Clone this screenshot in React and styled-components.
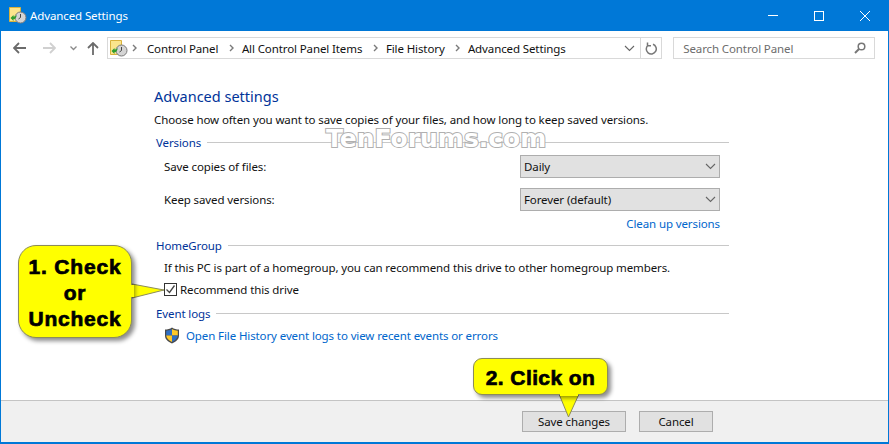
import React from "react";
import styled, { createGlobalStyle } from "styled-components";

const GlobalStyle = createGlobalStyle`
  html, body {
    margin: 0;
    padding: 0;
    background: #fff;
  }
  * {
    box-sizing: border-box;
  }
`;

const Window = styled.div`
  position: relative;
  width: 889px;
  height: 444px;
  display: flex;
  flex-direction: column;
  overflow: hidden;
  background: #fff;
  border: solid #0078d7;
  border-width: 0 1px 2px 1px;
  font-family: "Noto Sans", sans-serif;
  font-size: 11.5px;
  letter-spacing: -0.11px;
  color: #111;
`;

const TitleBar = styled.div`
  height: 31px;
  margin: 0 -1px;
  padding: 0 1px 0 9px;
  display: flex;
  align-items: center;
  background: #0078d7;
  color: #fff;
`;

const TitleText = styled.span`
  margin-left: 3px;
  flex: 1;
`;

const WinButton = styled.div`
  width: 46px;
  height: 31px;
  display: flex;
  align-items: center;
  justify-content: center;
`;

const NavBar = styled.div`
  height: 34px;
  padding: 6px 13px 6px 7px;
  display: flex;
  align-items: stretch;
`;

const NavIcon = styled.div`
  width: ${(p) => p.$w}px;
  display: flex;
  align-items: center;
  justify-content: center;
`;

const AddressBox = styled.div`
  width: 556px;
  display: flex;
  align-items: center;
  border: 1px solid #d9d9d9;
  padding-left: 2px;
`;

const Crumbs = styled.div`
  flex: 1;
  display: flex;
  align-items: center;
`;

const Crumb = styled.span`
  width: ${(p) => p.$w}px;
  white-space: nowrap;
`;

const CrumbArrow = styled.svg`
  width: 5px;
  height: 8px;
  margin: 0 ${(p) => p.$after}px 0 ${(p) => p.$before}px;
`;

const AddressTail = styled.div`
  width: 21px;
  height: 100%;
  display: flex;
  align-items: center;
  justify-content: center;
  border-left: ${(p) => (p.$divided ? "1px solid #d9d9d9" : "none")};
`;

const SearchBox = styled.div`
  width: 202px;
  margin-left: 11px;
  padding: 0 8px 0 9px;
  display: flex;
  align-items: center;
  justify-content: space-between;
  border: 1px solid #d9d9d9;
  color: #6d6d6d;
`;

const Content = styled.div`
  flex: 1;
  padding: 21px 0 0 153px;
  width: 728px;
  display: flex;
  flex-direction: column;
`;

const Heading = styled.h1`
  margin: 0;
  height: 20px;
  line-height: 20px;
  font-size: 14.5px;
  font-weight: 400;
  letter-spacing: 0;
  color: #003399;
`;

const Description = styled.p`
  margin: 5px 0 0;
  height: 18px;
  line-height: 18px;
  white-space: nowrap;
`;

const SectionHead = styled.div`
  margin-top: ${(p) => p.$top}px;
  padding-left: 2px;
  height: 16px;
  display: flex;
  align-items: center;
  gap: 6px;
  color: #003399;
  &::after {
    content: "";
    flex: 1;
    height: 1px;
    background: #c8c8c8;
  }
`;

const FieldRow = styled.div`
  margin-top: ${(p) => p.$top}px;
  padding-left: 10px;
  width: 566px;
  display: flex;
  align-items: center;
  justify-content: space-between;
`;

const SelectBox = styled.div`
  width: 200px;
  height: 23px;
  padding: 0 3px;
  display: flex;
  align-items: center;
  justify-content: space-between;
  background: #e1e1e1;
  border: 1px solid #adadad;
`;

const LinkRight = styled.a`
  margin-top: 5px;
  width: 566px;
  height: 16px;
  line-height: 16px;
  text-align: right;
  color: #0066cc;
`;

const BodyLine = styled.div`
  margin-top: ${(p) => p.$top}px;
  padding-left: 10px;
  height: 16px;
  line-height: 16px;
  white-space: nowrap;
`;

const CheckRow = styled.label`
  margin-top: 6px;
  padding-left: 10px;
  height: 14px;
  display: flex;
  align-items: center;
  gap: 3px;
`;

const CheckBox = styled.span`
  width: 13px;
  height: 13px;
  display: flex;
  background: #fff;
  border: 1px solid #333;
`;

const EventRow = styled.div`
  margin-top: 5px;
  padding-left: 10px;
  height: 18px;
  display: flex;
  align-items: center;
  gap: 6px;
  color: #0066cc;
`;

const Footer = styled.div`
  height: 42px;
  padding: 10px 175px 0 0;
  display: flex;
  justify-content: flex-end;
  gap: 13px;
  background: #f0f0f0;
  border-top: 1px solid #c4c4c4;
`;

const Button = styled.button`
  width: ${(p) => p.$w}px;
  height: 21px;
  padding: 0;
  background: #e1e1e1;
  border: 1px solid #adadad;
  font: inherit;
  letter-spacing: inherit;
  color: inherit;
`;

const Watermark = styled.div`
  position: absolute;
  left: 325px;
  top: 127px;
  font-family: "DejaVu Sans", sans-serif;
  font-weight: 700;
  font-size: 25px;
  line-height: 24px;
  letter-spacing: 0;
  color: #fff;
  -webkit-text-stroke: 2px #b0b0b0;
  paint-order: stroke;
  white-space: nowrap;
`;

const Callout = styled.div`
  position: absolute;
  left: ${(p) => p.$x}px;
  top: ${(p) => p.$y}px;
  width: ${(p) => p.$w}px;
  height: ${(p) => p.$h}px;
  padding-top: 2px;
  display: flex;
  align-items: center;
  justify-content: center;
  text-align: center;
  background: #ffff00;
  border: 1px solid #8c8c5a;
  border-radius: ${(p) => p.$r}px;
  box-shadow: 3px 3px 4px rgba(0, 0, 0, 0.45);
  font-family: "Liberation Sans", sans-serif;
  font-weight: 700;
  font-size: 21px;
  line-height: 26px;
  letter-spacing: ${(p) => p.$ls}px;
  color: #000;
  -webkit-text-stroke: 0.7px #000;
`;

const Tail = styled.svg`
  position: absolute;
  left: ${(p) => p.$x}px;
  top: ${(p) => p.$y}px;
  overflow: visible;
`;

function HistoryIcon() {
  return (
    <svg width="18" height="17" viewBox="0 0 18 17">
      <path d="M.5.5h11v14H.5z" fill="#fbe58c" stroke="#d9b23c" />
      <circle cx="11.5" cy="10.5" r="5.5" fill="#d4d4d4" stroke="#7a7a7a" />
      <path d="M11.5 7v3.5l-2 1.5" fill="none" stroke="#444" />
      <path d="M1.5 11 4.5 8v1.6c1.3 0 2.4-.5 3.2-1.8C7.7 10.6 6.3 12.2 4.5 12.3V14z" fill="#2f9e2f" />
    </svg>
  );
}

function Chevron({ color = "#666" }) {
  return (
    <svg width="11" height="7" viewBox="0 0 11 7">
      <path d="M1 1l4.5 4.5L10 1" fill="none" stroke={color} strokeWidth="1.1" />
    </svg>
  );
}

function CrumbSep({ before, after }) {
  return (
    <CrumbArrow viewBox="0 0 5 8" $before={before} $after={after}>
      <path d="M1 1l3 3-3 3" fill="none" stroke="#7a7a7a" strokeWidth="1.4" />
    </CrumbArrow>
  );
}

function Arrow({ color, flip }) {
  return (
    <svg width="13" height="12" viewBox="0 0 13 12" style={flip ? { transform: "scaleX(-1)" } : undefined}>
      <path d="M6 1L1 6l5 5M1 6h12" fill="none" stroke={color} strokeWidth="1.8" />
    </svg>
  );
}

function Shield() {
  return (
    <svg width="16" height="17" viewBox="0 0 16 17">
      <path d="M8 0.5C6 2 3.5 2.6 1 2.6v6C1 12.5 4 15 8 16.5c4-1.5 7-4 7-7.9v-6C12.5 2.6 10 2 8 0.5z" fill="#4a4a4a" />
      <path d="M8 2C6.2 3 4.2 3.6 2.2 3.7V8.4H8z" fill="#2f6fc4" />
      <path d="M8 2c1.8 1 3.8 1.6 5.8 1.7V8.4H8z" fill="#ffc928" />
      <path d="M2.2 8.4c.2 3 2.6 5 5.8 6.5V8.4z" fill="#ffc928" />
      <path d="M13.8 8.4c-.2 3-2.6 5-5.8 6.5V8.4z" fill="#2f6fc4" />
    </svg>
  );
}

export default function App() {
  return (
    <Window>
      <GlobalStyle />
      <TitleBar>
        <HistoryIcon />
        <TitleText>Advanced Settings</TitleText>
        <WinButton>
          <svg width="10" height="1"><rect width="10" height="1" fill="#fff" /></svg>
        </WinButton>
        <WinButton>
          <svg width="10" height="10"><rect x="0.5" y="0.5" width="9" height="9" fill="none" stroke="#fff" /></svg>
        </WinButton>
        <WinButton>
          <svg width="10" height="10"><path d="M0 0l10 10M10 0L0 10" stroke="#fff" /></svg>
        </WinButton>
      </TitleBar>
      <NavBar>
        <NavIcon $w={24}><Arrow color="#6b6b6b" /></NavIcon>
        <NavIcon $w={36}><Arrow color="#d0d0d0" flip /></NavIcon>
        <NavIcon $w={12}>
          <svg width="7" height="5" viewBox="0 0 7 5"><path d="M.5.5l3 3 3-3" fill="none" stroke="#8a8a8a" strokeWidth="1.3" /></svg>
        </NavIcon>
        <NavIcon $w={27}>
          <svg width="12" height="13" viewBox="0 0 12 13"><path d="M1 6l5-5 5 5M6 1v12" fill="none" stroke="#6b6b6b" strokeWidth="1.8" /></svg>
        </NavIcon>
        <AddressBox>
          <HistoryIcon />
          <Crumbs>
            <CrumbSep before={4} after={10} />
            <Crumb $w={82}>Control Panel</Crumb>
            <CrumbSep before={0} after={8} />
            <Crumb $w={131}>All Control Panel Items</Crumb>
            <CrumbSep before={0} after={8} />
            <Crumb $w={69}>File History</Crumb>
            <CrumbSep before={0} after={8} />
            <Crumb $w={100}>Advanced Settings</Crumb>
          </Crumbs>
          <AddressTail><Chevron /></AddressTail>
          <AddressTail $divided>
            <svg width="12" height="13" viewBox="0 0 12 13">
              <path d="M3 3.2A5 5 0 1 0 8 2.3M2.5 0.5V3.7H6" fill="none" stroke="#777" strokeWidth="1.5" />
            </svg>
          </AddressTail>
        </AddressBox>
        <SearchBox>
          Search Control Panel
          <svg width="12" height="12" viewBox="0 0 12 12">
            <circle cx="7.5" cy="4.5" r="3.3" fill="none" stroke="#777" strokeWidth="1.5" />
            <path d="M5 7L1 11" stroke="#777" strokeWidth="2" />
          </svg>
        </SearchBox>
      </NavBar>

      <Content>
        <Heading>Advanced settings</Heading>
        <Description>Choose how often you want to save copies of your files, and how long to keep saved versions.</Description>
        <SectionHead $top={5}>Versions</SectionHead>
        <FieldRow $top={5}>
          <span>Save copies of files:</span>
          <SelectBox>Daily<Chevron /></SelectBox>
        </FieldRow>
        <FieldRow $top={10}>
          <span>Keep saved versions:</span>
          <SelectBox>Forever (default)<Chevron /></SelectBox>
        </FieldRow>
        <LinkRight>Clean up versions</LinkRight>
        <SectionHead $top={5}>HomeGroup</SectionHead>
        <BodyLine $top={7}>If this PC is part of a homegroup, you can recommend this drive to other homegroup members.</BodyLine>
        <CheckRow>
          <CheckBox>
            <svg width="11" height="11" viewBox="0 0 11 11"><path d="M1.5 5.5l3 3 5-7" fill="none" stroke="#444" strokeWidth="1.3" /></svg>
          </CheckBox>
          Recommend this drive
        </CheckRow>
        <SectionHead $top={9}>Event logs</SectionHead>
        <EventRow>
          <Shield />
          Open File History event logs to view recent events or errors
        </EventRow>
      </Content>

      <Footer>
        <Button $w={104}>Save changes</Button>
        <Button $w={74}>Cancel</Button>
      </Footer>

      <Watermark>TenForums.com</Watermark>

      <Tail $x={128} $y={278} width="36" height="24">
        <path d="M3 6L35 12 3 20z" fill="#ffff00" stroke="#8c8c5a" strokeLinejoin="round" />
      </Tail>
      <Callout $x={17} $y={245} $w={114} $h={93} $r={18} $ls={0.8}>1. Check<br />or<br />Uncheck</Callout>
      <Tail $x={128} $y={278} width="6" height="24">
        <rect x="1" y="7" width="4" height="12" fill="#ffff00" />
      </Tail>

      <Tail $x={555} $y={392} width="26" height="28">
        <path d="M3 2L12.5 25 23 2z" fill="#ffff00" stroke="#8c8c5a" strokeLinejoin="round" />
      </Tail>
      <Callout $x={472} $y={358} $w={135} $h={37} $r={9} $ls={0.4}>2. Click on</Callout>
      <Tail $x={555} $y={390} width="26" height="6">
        <rect x="4" y="0" width="18" height="6" fill="#ffff00" />
      </Tail>
    </Window>
  );
}
